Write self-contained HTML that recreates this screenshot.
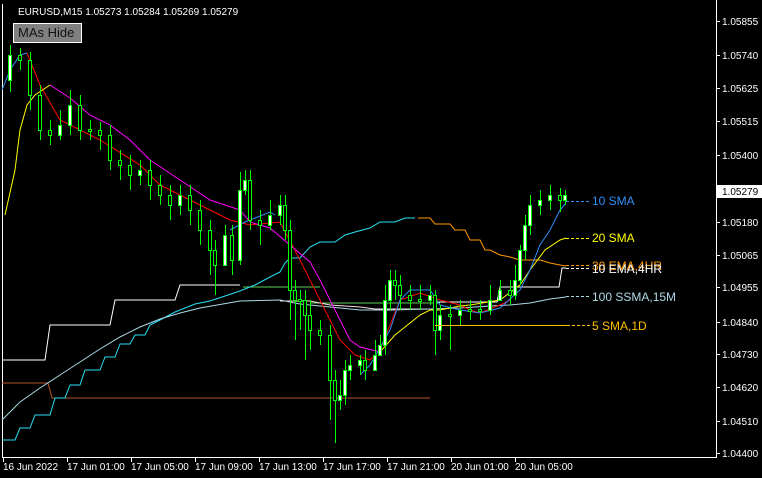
<!DOCTYPE html>
<html><head><meta charset="utf-8"><style>
html,body{margin:0;padding:0;background:#000;width:762px;height:478px;overflow:hidden}
svg{position:absolute;left:0;top:0}
text{font-family:"Liberation Sans",sans-serif}
#btn{position:absolute;left:13px;top:23px;width:67px;height:18px;background:#808080;border:1px solid #fff;color:#111;font:13px "Liberation Sans",sans-serif;line-height:18px;text-indent:4px}
</style></head><body>
<svg width="762" height="478" xmlns="http://www.w3.org/2000/svg">
<polyline fill="none" stroke="#fff" points="2.5,4 2.5,457.5 716.5,457.5 716.5,0"/>
<g fill="none" stroke-width="1">
<polyline stroke="#b5552a" points="2,383 48,383 52,398 430,398"/>
<polyline stroke="#fff" points="2,360 45,360 50,325 110,325 115,300 175,300 180,285 240,285"/>
<polyline stroke="#fff" points="435,302 497,302 500,287 559,287 562,268 566,268"/>
<polyline stroke="#5ad05a" points="243,287 320,287"/>
<polyline stroke="#5ad05a" points="310,303 440,303"/>
<polyline stroke="#ffe0e0" points="280,301 310,301 330,305 360,307 375,309 435,309"/>
<polyline stroke="#27e0f5" points="2,440 15,440 20,428 30,428 35,415 50,415 55,398 65,398 70,385 80,385 85,370 100,370 105,357 115,357 120,344 130,344 135,335 145,335 150,325 160,320 175,312 195,304 210,301 225,296 240,291 255,285 270,277 280,272 285,263 290,258 300,258 310,247 320,242 335,242 345,235 355,232 370,228 380,222 395,222 405,218 415,218"/>
<polyline stroke="#ff9a00" points="418,218 430,218 435,224 450,224 455,230 465,230 470,240 480,240 485,250 490,250 500,255 510,257 520,260 540,260 550,263 560,265 566,266"/>
<polyline stroke="#add8e6" points="2,420 20,402 40,388 60,375 80,362 100,349 120,337 140,327 160,319 180,313 200,308 240,301 280,300 300,304 320,306 340,308 360,310 390,310 430,309 460,308 490,306 510,305 530,303 550,299 566,297"/>
<polyline stroke="#ff0000" points="27,53 40,85 60,120 100,140 140,165 160,185 200,205 230,220 250,225 280,222 300,260 320,300 340,340 355,355 370,360 380,350 400,300 420,293 440,300 460,305 470,310 480,313 500,305 510,300"/>
<polyline stroke="#ff00ff" points="50,85 70,98 90,115 110,125 130,140 150,160 180,180 210,200 240,210 250,222 270,228 290,245 310,262 320,280 340,320 350,340 360,347 380,352"/>
<polyline stroke="#ffff00" points="5,215 15,170 20,130 27,105 35,95 50,85"/>
<polyline stroke="#ffff00" points="380,352 395,335 410,323 420,315 430,310 440,310 460,306 470,305 500,300 520,285 530,270 545,250 560,240 566,238"/>
<polyline stroke="#2f8ff5" points="2,90 10,70 20,55 27,53"/>
<polyline stroke="#2f8ff5" points="230,230 245,222 270,212 275,215"/>
<polyline stroke="#2f8ff5" points="360,375 370,365 390,330 400,300 410,290 430,290 440,305 460,310 480,313 500,308 520,290 530,270 540,245 550,230 560,210 566,203"/>
</g>
<path stroke="#00ff00" fill="none" d="M10.5 45V92 M20.5 48V70 M30.5 52V110 M40.5 85V140 M50.5 120V145 M60.5 110V140 M70.5 90V135 M80.5 95V140 M90.5 120V140 M100.5 122V150 M110.5 125V170 M120.5 150V180 M130.5 155V190 M140.5 160V185 M150.5 160V200 M160.5 175V205 M170.5 185V220 M180.5 185V215 M190.5 185V225 M200.5 200V245 M210.5 220V275 M215.5 240V295 M225.5 225V245 M232.5 225V275 M240.5 172V265 M245.5 170V195 M250.5 170V230 M260.5 210V245 M270.5 200V230 M280.5 195V225 M285.5 195V240 M290.5 220V320 M295.5 280V340 M300.5 290V330 M305.5 290V360 M310.5 300V350 M320.5 320V345 M330.5 325V420 M335.5 370V443 M340.5 380V410 M345.5 360V405 M350.5 355V380 M360.5 355V375 M365.5 350V380 M375.5 340V370 M380.5 335V355 M385.5 285V355 M390.5 270V310 M395.5 270V300 M400.5 275V310 M410.5 285V310 M420.5 285V310 M430.5 285V305 M435.5 290V355 M440.5 305V340 M450.5 305V350 M460.5 300V325 M470.5 300V320 M480.5 300V320 M490.5 285V315 M500.5 280V300 M510.5 280V305 M515.5 265V300 M520.5 245V285 M525.5 215V260 M530.5 195V235 M540.5 190V215 M550.5 185V210 M560.5 188V212 M565.5 190V205"/>
<g stroke="#00ff00">
<rect x="8.5" y="55.5" width="3" height="25" fill="#fff"/>
<rect x="18.5" y="55.5" width="3" height="5" fill="#000"/>
<rect x="28.5" y="60.5" width="3" height="35" fill="#000"/>
<rect x="38.5" y="95.5" width="3" height="35" fill="#000"/>
<rect x="48.5" y="130.5" width="3" height="5" fill="#000"/>
<rect x="58.5" y="125.5" width="3" height="10" fill="#fff"/>
<rect x="68.5" y="105.5" width="3" height="20" fill="#fff"/>
<rect x="78.5" y="105.5" width="3" height="25" fill="#000"/>
<rect x="88.5" y="129.5" width="3" height="2" fill="#000"/>
<rect x="98.5" y="130.5" width="3" height="5" fill="#000"/>
<rect x="108.5" y="135.5" width="3" height="25" fill="#000"/>
<rect x="118.5" y="160.5" width="3" height="5" fill="#000"/>
<rect x="128.5" y="165.5" width="3" height="10" fill="#000"/>
<rect x="138.5" y="170.5" width="3" height="5" fill="#fff"/>
<rect x="148.5" y="170.5" width="3" height="15" fill="#000"/>
<rect x="158.5" y="185.5" width="3" height="10" fill="#000"/>
<rect x="168.5" y="195.5" width="3" height="10" fill="#000"/>
<rect x="178.5" y="195.5" width="3" height="10" fill="#fff"/>
<rect x="188.5" y="195.5" width="3" height="15" fill="#000"/>
<rect x="198.5" y="210.5" width="3" height="20" fill="#000"/>
<rect x="208.5" y="230.5" width="3" height="20" fill="#000"/>
<rect x="213.5" y="250.5" width="3" height="15" fill="#000"/>
<rect x="223.5" y="235.5" width="3" height="30" fill="#fff"/>
<rect x="230.5" y="235.5" width="3" height="25" fill="#000"/>
<rect x="238.5" y="190.5" width="3" height="70" fill="#fff"/>
<rect x="243.5" y="180.5" width="3" height="10" fill="#fff"/>
<rect x="248.5" y="180.5" width="3" height="40" fill="#000"/>
<rect x="258.5" y="220.5" width="3" height="5" fill="#000"/>
<rect x="268.5" y="215.5" width="3" height="10" fill="#fff"/>
<rect x="278.5" y="205.5" width="3" height="10" fill="#fff"/>
<rect x="283.5" y="205.5" width="3" height="25" fill="#000"/>
<rect x="288.5" y="230.5" width="3" height="60" fill="#000"/>
<rect x="293.5" y="290.5" width="3" height="10" fill="#000"/>
<rect x="298.5" y="299.5" width="3" height="2" fill="#000"/>
<rect x="303.5" y="300.5" width="3" height="15" fill="#000"/>
<rect x="308.5" y="315.5" width="3" height="15" fill="#000"/>
<rect x="318.5" y="330.5" width="3" height="5" fill="#000"/>
<rect x="328.5" y="335.5" width="3" height="45" fill="#000"/>
<rect x="333.5" y="380.5" width="3" height="20" fill="#000"/>
<rect x="338.5" y="395.5" width="3" height="5" fill="#fff"/>
<rect x="343.5" y="370.5" width="3" height="25" fill="#fff"/>
<rect x="348.5" y="365.5" width="3" height="5" fill="#fff"/>
<rect x="358.5" y="360.5" width="3" height="5" fill="#fff"/>
<rect x="363.5" y="360.5" width="3" height="10" fill="#000"/>
<rect x="373.5" y="355.5" width="3" height="15" fill="#fff"/>
<rect x="378.5" y="345.5" width="3" height="10" fill="#fff"/>
<rect x="383.5" y="300.5" width="3" height="45" fill="#fff"/>
<rect x="388.5" y="280.5" width="3" height="20" fill="#fff"/>
<rect x="393.5" y="280.5" width="3" height="5" fill="#000"/>
<rect x="398.5" y="285.5" width="3" height="10" fill="#000"/>
<rect x="408.5" y="295.5" width="3" height="5" fill="#000"/>
<rect x="418.5" y="299.5" width="3" height="2" fill="#000"/>
<rect x="428.5" y="295.5" width="3" height="5" fill="#fff"/>
<rect x="433.5" y="295.5" width="3" height="35" fill="#000"/>
<rect x="438.5" y="315.5" width="3" height="15" fill="#fff"/>
<rect x="448.5" y="314.5" width="3" height="2" fill="#000"/>
<rect x="458.5" y="310.5" width="3" height="5" fill="#fff"/>
<rect x="468.5" y="309.5" width="3" height="2" fill="#000"/>
<rect x="478.5" y="309.5" width="3" height="2" fill="#000"/>
<rect x="488.5" y="300.5" width="3" height="10" fill="#fff"/>
<rect x="498.5" y="290.5" width="3" height="10" fill="#fff"/>
<rect x="508.5" y="290.5" width="3" height="5" fill="#000"/>
<rect x="513.5" y="280.5" width="3" height="15" fill="#fff"/>
<rect x="518.5" y="250.5" width="3" height="30" fill="#fff"/>
<rect x="523.5" y="225.5" width="3" height="25" fill="#fff"/>
<rect x="528.5" y="205.5" width="3" height="20" fill="#fff"/>
<rect x="538.5" y="200.5" width="3" height="5" fill="#fff"/>
<rect x="548.5" y="195.5" width="3" height="5" fill="#fff"/>
<rect x="558.5" y="195.5" width="3" height="5" fill="#000"/>
<rect x="563.5" y="195.5" width="3" height="5" fill="#fff"/>
</g>
<g fill="none" stroke-dasharray="3,2">
<line x1="566" y1="201.5" x2="590" y2="201.5" stroke="#2f8ff5"/>
<line x1="566" y1="238.5" x2="590" y2="238.5" stroke="#ffff00"/>
<line x1="566" y1="265.5" x2="590" y2="265.5" stroke="#ff9a00"/>
<line x1="566" y1="268.5" x2="590" y2="268.5" stroke="#fff"/>
<line x1="566" y1="296.5" x2="590" y2="296.5" stroke="#add8e6"/>
<line x1="567" y1="325.5" x2="590" y2="325.5" stroke="#ffc000"/>
</g>
<line x1="435" y1="325.5" x2="567" y2="325.5" stroke="#ffc000"/>
<g font-size="12">
<text x="592" y="205" fill="#2f8ff5">10 SMA</text>
<text x="592" y="242" fill="#ffff00">20 SMA</text>
<text x="592" y="270" fill="#ff9a00">30 EMA,4HR</text>
<text x="592" y="273" fill="#fff">10 EMA,4HR</text>
<text x="592" y="301" fill="#add8e6">100 SSMA,15M</text>
<text x="592" y="330" fill="#ffc000">5 SMA,1D</text>
</g>
<g font-size="10" fill="#fff">
<text x="18" y="15">EURUSD,M15  1.05273 1.05284 1.05269 1.05279</text>
<text x="722" y="25">1.05855</text><text x="722" y="59">1.05740</text><text x="722" y="92">1.05625</text><text x="722" y="125">1.05515</text><text x="722" y="159">1.05400</text><text x="722" y="226">1.05180</text><text x="722" y="259">1.05065</text><text x="722" y="291">1.04955</text><text x="722" y="326">1.04840</text><text x="722" y="358">1.04730</text><text x="722" y="391">1.04620</text><text x="722" y="425">1.04510</text><text x="722" y="457">1.04400</text>
<rect x="717" y="185" width="45" height="13" fill="#fff"/>
<text x="722" y="195" fill="#000">1.05279</text>
<text x="3" y="470">16 Jun 2022</text><text x="67" y="470">17 Jun 01:00</text><text x="131" y="470">17 Jun 05:00</text><text x="195" y="470">17 Jun 09:00</text><text x="259" y="470">17 Jun 13:00</text><text x="323" y="470">17 Jun 17:00</text><text x="387" y="470">17 Jun 21:00</text><text x="451" y="470">20 Jun 01:00</text><text x="515" y="470">20 Jun 05:00</text>
</g>
<path stroke="#fff" d="M3.5 458V462M67.5 458V462M131.5 458V462M195.5 458V462M259.5 458V462M323.5 458V462M387.5 458V462M451.5 458V462M515.5 458V462M717 21.5H720M717 55.5H720M717 88.5H720M717 121.5H720M717 155.5H720M717 222.5H720M717 255.5H720M717 287.5H720M717 322.5H720M717 354.5H720M717 387.5H720M717 421.5H720M717 453.5H720"/>
</svg>
<div id="btn">MAs Hide</div>
</body></html>
